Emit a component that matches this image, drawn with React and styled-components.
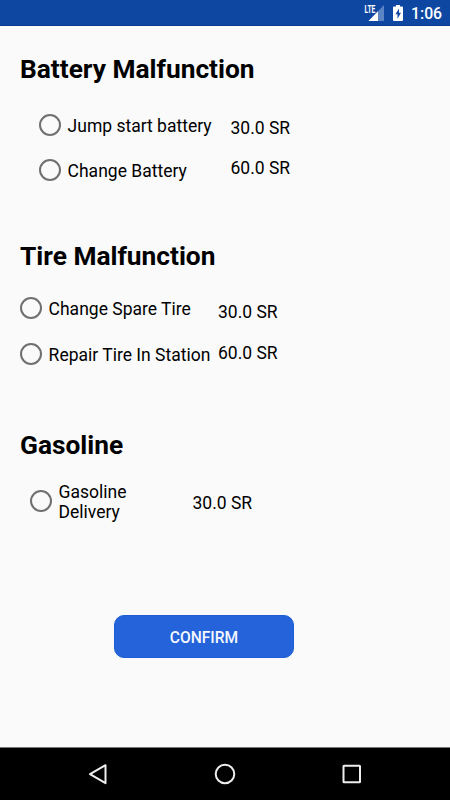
import React from "react";
import styled, { createGlobalStyle } from "styled-components";

const GlobalStyle = createGlobalStyle`
  * { box-sizing: border-box; }
  body { margin: 0; background: #fafafa; }
`;

const Screen = styled.div`
  display: flex;
  flex-direction: column;
  width: 450px;
  height: 800px;
  overflow: hidden;
  background: #fafafa;
  color: #000;
  font-family: Roboto, "Liberation Sans", sans-serif;
`;

const StatusBar = styled.header`
  display: flex;
  flex: none;
  justify-content: flex-end;
  height: 26px;
  background: #0d47a1;
  border-bottom: 1px solid #073b8f;
`;

const Clock = styled.time`
  width: 39px;
  margin-top: 4px;
  color: #fff;
  font-size: 15.8px;
  font-weight: 500;
  line-height: 20px;
  white-space: nowrap;
`;

const Content = styled.main`
  display: flex;
  flex: 1;
  flex-direction: column;
`;

const Section = styled.section`
  flex: none;
  height: ${(p) => p.$height}px;
  padding-left: 20px;
`;

const Heading = styled.h2`
  margin: 0;
  padding-top: ${(p) => p.$top}px;
  font-size: 26.3px;
  font-weight: 700;
  line-height: 30px;
  white-space: nowrap;
`;

const Columns = styled.div`
  display: flex;
  padding-left: ${(p) => p.$indent}px;
`;

const Options = styled.div`
  display: flex;
  flex: none;
  flex-direction: column;
  width: ${(p) => p.$width}px;
  padding-top: ${(p) => p.$top}px;
  gap: ${(p) => p.$gap || 0}px;
`;

const Option = styled.label`
  display: flex;
  align-items: center;
  gap: 6.6px;
  font-size: 17.5px;
  line-height: 20.5px;
  white-space: pre;
`;

const Radio = styled.input`
  appearance: none;
  flex: none;
  width: 22px;
  height: 22px;
  margin: 0;
  border: 2px solid #707070;
  border-radius: 50%;

  &:checked {
    background: radial-gradient(#2463d9 5px, transparent 6px);
  }
`;

const OptionText = styled.span`
  padding-top: 2px;
`;

const Prices = styled.div`
  display: flex;
  flex-direction: column;
  padding-top: ${(p) => p.$top}px;
  gap: ${(p) => p.$gap || 0}px;
  font-size: 17.5px;
  line-height: 20.5px;
  white-space: nowrap;
`;

const Confirm = styled.button`
  flex: none;
  width: 180px;
  height: 43.5px;
  margin: -0.5px 0 0 114px;
  padding: 3px 0 0;
  border: 1px solid #1d5dd5;
  border-radius: 10px;
  background: #2463d9;
  color: #f4f7ff;
  font: 500 15.6px/20px Roboto, "Liberation Sans", sans-serif;
`;

const NavBar = styled.nav`
  display: flex;
  flex: none;
  justify-content: space-between;
  align-items: center;
  height: 53px;
  padding: 0 86px;
  background: #000;
  border-top: 1px solid #777;
`;

const NavIcon = styled.svg`
  width: 24px;
  height: 24px;
  fill: none;
  stroke: #eee;
  stroke-width: 2;
  stroke-linejoin: round;
`;

const StatusIcons = styled.svg`
  width: 50px;
  height: 26px;
  flex: none;
`;

const LteText = styled.text`
  fill: #fff;
  font: 700 10px Roboto, sans-serif;
`;

const sections = [
  {
    title: "Battery Malfunction", height: 187, top: 28, indent: 19,
    width: 191.5, optionsTop: 29.5, gap: 23, pricesTop: 34, pricesGap: 19.5,
    options: [["Jump start battery", "30.0 SR"], ["Change Battery", "60.0 SR"]],
  },
  {
    title: "Tire Malfunction", height: 188, top: 28, indent: 0,
    width: 198, optionsTop: 25.7, gap: 23.7, pricesTop: 31, pricesGap: 20,
    options: [["Change Spare Tire", "30.0 SR"], ["Repair Tire In Station", "60.0 SR"]],
  },
  {
    title: "Gasoline", height: 214, top: 28.5, indent: 10,
    width: 162.5, optionsTop: 20.3, gap: 0, pricesTop: 33, pricesGap: 0,
    options: [["Gasoline\nDelivery", "30.0 SR"]],
  },
];

export default function App() {
  return (
    <>
      <GlobalStyle />
      <Screen>
        <StatusBar>
          <StatusIcons viewBox="361 0 50 26">
            <path d="M384 5v16h-15.500z" fill="#5a84c4" />
            <path d="M378 11.200v9.800h-9.500z" fill="#fff" />
            <path d="M364 4h11.500v9h-11.500z" fill="#0d47a1" />
            <LteText x="364.500" y="12.500" textLength="10.800" lengthAdjust="spacingAndGlyphs">LTE</LteText>
            <path d="M396 5h4v1.500h2q1 0 1 1V20q0 1-1 1h-8q-1 0-1-1V7.500q0-1 1-1h2z" fill="#fff" />
            <path d="M399 8.500v4.300h2l-3.500 6v-4.500h-2z" fill="#0d47a1" />
          </StatusIcons>
          <Clock>1:06</Clock>
        </StatusBar>
        <Content>
          {sections.map((s) => (
            <Section key={s.title} $height={s.height}>
              <Heading $top={s.top}>{s.title}</Heading>
              <Columns $indent={s.indent}>
                <Options $width={s.width} $top={s.optionsTop} $gap={s.gap}>
                  {s.options.map(([label]) => (
                    <Option key={label}>
                      <Radio type="radio" name={s.title} />
                      <OptionText>{label}</OptionText>
                    </Option>
                  ))}
                </Options>
                <Prices $top={s.pricesTop} $gap={s.pricesGap}>
                  {s.options.map(([label, price]) => (
                    <span key={label}>{price}</span>
                  ))}
                </Prices>
              </Columns>
            </Section>
          ))}
          <Confirm type="button">CONFIRM</Confirm>
        </Content>
        <NavBar>
          <NavIcon viewBox="0 0 24 24"><path d="M4 12.200l15.500-9v18z" /></NavIcon>
          <NavIcon viewBox="0 0 24 24"><circle cx="12" cy="12" r="9.300" /></NavIcon>
          <NavIcon viewBox="0 0 24 24"><rect x="3.500" y="3.700" width="16.500" height="16.500" rx=".5" /></NavIcon>
        </NavBar>
      </Screen>
    </>
  );
}
